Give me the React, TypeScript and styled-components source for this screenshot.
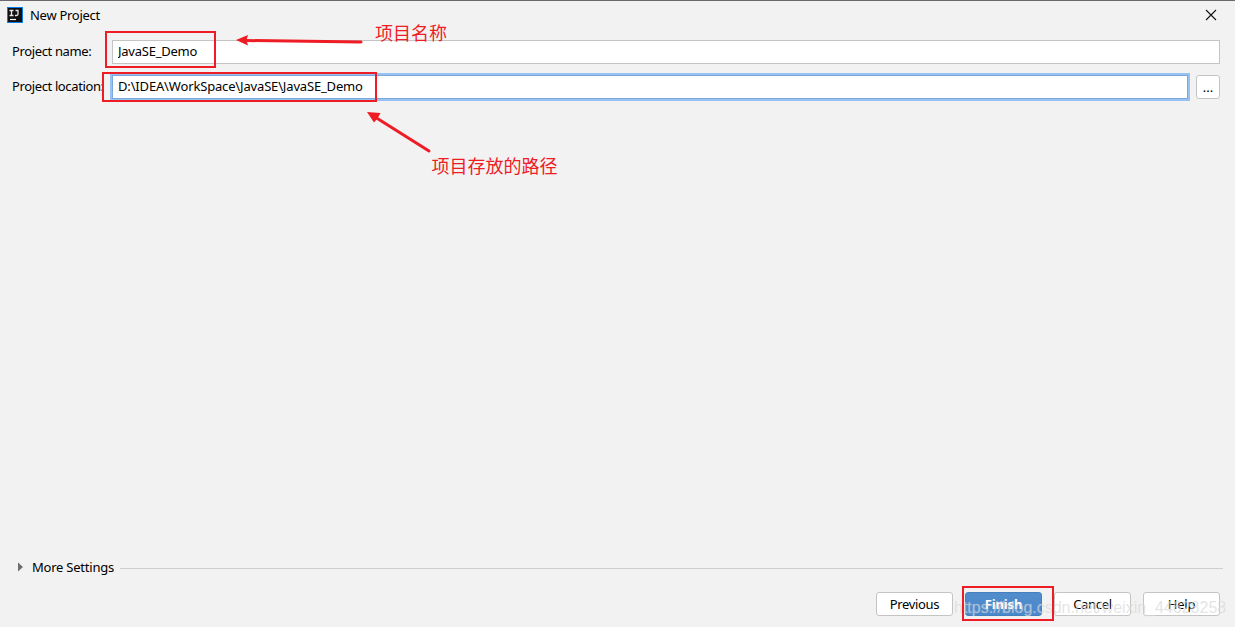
import React from "react";
import styled, { createGlobalStyle } from "styled-components";

const RED = "#ee1c25";

const GlobalStyle = createGlobalStyle`
  * { box-sizing: border-box; }
  body { margin: 0; overflow: hidden; background: #f2f2f2; }
  button, input { font: inherit; letter-spacing: inherit; color: inherit; }
`;

const Dialog = styled.main`
  position: relative;
  display: flex;
  flex-direction: column;
  width: 1235px;
  height: 627px;
  background: #f2f2f2;
  border-top: 1px solid #6b696b;
  color: #000;
  font: 13px/18px "Noto Sans", "Noto Sans CJK SC", sans-serif;
`;

const TitleBar = styled.header`
  display: flex;
  align-items: center;
  height: 28px;
  padding: 0 18px 0 7px;
`;

const Title = styled.h1`
  flex: 1;
  margin: 0 0 0 7px;
  font-size: 13px;
  font-weight: 400;
  letter-spacing: -0.28px;
`;

const CloseButton = styled.button`
  display: flex;
  padding: 0;
  border: 0;
  background: none;
`;

const Form = styled.section`
  display: flex;
  flex-direction: column;
  gap: 9px;
  padding: 10px 15px 0 12px;
`;

const Field = styled.div`
  display: flex;
  align-items: center;
  height: 26px;
`;

const Label = styled.label`
  width: 99px;
  margin-top: -2px;
  white-space: nowrap;
  letter-spacing: -0.37px;
`;

const TextInput = styled.input<{ $focused?: boolean; $spacing: number }>`
  flex: 1;
  min-width: 0;
  height: 24px;
  margin-left: 1px;
  padding: 0 5px 2px;
  border: 1px solid ${(p) => (p.$focused ? "#7ba7dc" : "#c4c4c4")};
  box-shadow: ${(p) => (p.$focused ? "0 0 0 2px #97c3f3" : "none")};
  background: #fff;
  outline: none;
  letter-spacing: ${(p) => p.$spacing}px;
`;

const Button = styled.button<{ $primary?: boolean; $small?: boolean; $spacing?: number }>`
  width: ${(p) => (p.$small ? 24 : 77)}px;
  height: 24px;
  padding: 0;
  border: 1px solid ${(p) => (p.$primary ? "#4480bf" : "#c4c4c4")};
  border-radius: 3px;
  background: ${(p) => (p.$primary ? "linear-gradient(#528ccb, #4989cc)" : "#fff")};
  color: ${(p) => (p.$primary ? "#fff" : "#000")};
  font-weight: ${(p) => (p.$primary ? 700 : 400)};
  letter-spacing: ${(p) => p.$spacing ?? 0}px;
  line-height: 20px;
`;

const BrowseButton = styled(Button)`
  margin-left: 8px;
`;

const Body = styled.div`
  flex: 1;
`;

const MoreSettings = styled.section`
  display: flex;
  align-items: center;
  height: 20px;
  padding: 0 12px 0 17px;
`;

const MoreLabel = styled.span`
  margin: 0 6px 0 8px;
  width: 82px;
  white-space: nowrap;
  letter-spacing: -0.23px;
`;

const Rule = styled.span`
  flex: 1;
  height: 1px;
  margin-top: 2px;
  background: #cfcfcf;
`;

const Footer = styled.footer`
  display: flex;
  justify-content: flex-end;
  gap: 12px;
  padding: 15px 15px 11px;
`;

const Highlight = styled.div<{ $x: number; $y: number; $w: number; $h: number }>`
  position: absolute;
  left: ${(p) => p.$x}px;
  top: ${(p) => p.$y - 1}px;
  width: ${(p) => p.$w}px;
  height: ${(p) => p.$h}px;
  border: 2px solid ${RED};
  pointer-events: none;
`;

const Note = styled.span<{ $x: number; $y: number }>`
  position: absolute;
  left: ${(p) => p.$x}px;
  top: ${(p) => p.$y - 1}px;
  color: ${RED};
  font: 18px/24px "Noto Sans CJK SC", sans-serif;
  white-space: nowrap;
`;

const Arrows = styled.svg`
  position: absolute;
  left: 0;
  top: -1px;
  pointer-events: none;
`;

const Watermark = styled.span`
  position: absolute;
  left: 954px;
  top: 597px;
  color: rgba(205, 205, 205, 0.55);
  font: 16px/20px "Liberation Sans", sans-serif;
  text-shadow: 0 0 1px rgba(255, 255, 255, 0.4);
  white-space: nowrap;
  pointer-events: none;
`;

function AppLogo() {
  return (
    <svg width="16" height="16" viewBox="0 0 16 16">
      <rect x="0.5" y="0.5" width="15" height="15" fill="#111" stroke="#0b7de8" />
      <path
        d="M2.500 3.500h4M4.500 3.500v5M2.500 8.500h4M8.500 3.500h3M11 3v4q0 1.500-1.500 1.500H8"
        fill="none"
        stroke="#e8e8e8"
        strokeWidth="1.3"
      />
      <path d="M3 12.500h6" stroke="#fff" strokeWidth="1.2" />
    </svg>
  );
}

export default function App() {
  return (
    <>
      <GlobalStyle />
      <Dialog>
        <TitleBar>
          <AppLogo />
          <Title>New Project</Title>
          <CloseButton aria-label="Close">
            <svg width="12" height="12" viewBox="0 0 12 12">
              <path d="M1 1l10 10M11 1L1 11" stroke="#111" strokeWidth="1.1" />
            </svg>
          </CloseButton>
        </TitleBar>
        <Form>
          <Field>
            <Label>Project name:</Label>
            <TextInput $spacing={-0.24} defaultValue="JavaSE_Demo" />
          </Field>
          <Field>
            <Label>Project location:</Label>
            <TextInput $focused $spacing={-0.16} defaultValue="D:\IDEA\WorkSpace\JavaSE\JavaSE_Demo" />
            <BrowseButton $small>...</BrowseButton>
          </Field>
        </Form>
        <Body />
        <MoreSettings>
          <svg width="7" height="10" viewBox="0 0 7 10">
            <path d="M1 0.5L6 5L1 9.5Z" fill="#6e6e6e" />
          </svg>
          <MoreLabel>More Settings</MoreLabel>
          <Rule />
        </MoreSettings>
        <Footer>
          <Button $spacing={-0.35}>Previous</Button>
          <Button $primary $spacing={-0.1}>Finish</Button>
          <Button $spacing={-0.3}>Cancel</Button>
          <Button $spacing={-0.2}>Help</Button>
        </Footer>
        <Highlight $x={105} $y={31} $w={111} $h={37} />
        <Highlight $x={102} $y={72} $w={275} $h={30} />
        <Arrows width="1235" height="200" viewBox="0 0 1235 200">
          <path d="M246 40.5L361 42" stroke={RED} strokeWidth="3" strokeLinecap="round" />
          <path d="M236 40L248 35L246.500 40L248 45.500Z" fill={RED} />
          <path d="M375 117L429 151" stroke={RED} strokeWidth="3" strokeLinecap="round" />
          <path d="M367 112L380.500 113L377.500 118.500L374 122.500Z" fill={RED} />
        </Arrows>
        <Note $x={375} $y={20}>项目名称</Note>
        <Note $x={431.5} $y={153}>项目存放的路径</Note>
        <Watermark>https://blog.csdn.net/weixin_44628258</Watermark>
        <Highlight $x={962} $y={586} $w={92} $h={35} />
      </Dialog>
    </>
  );
}
